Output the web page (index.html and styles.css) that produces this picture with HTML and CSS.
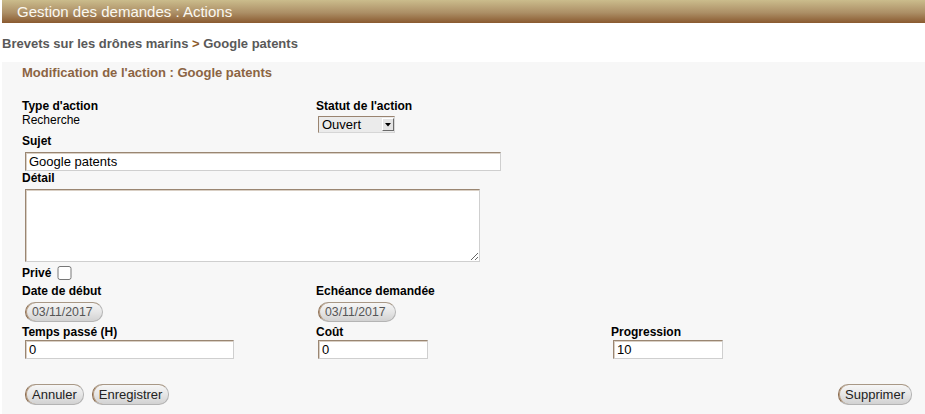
FILE: index.html
```html
<!DOCTYPE html>
<html lang="fr">
<head>
<meta charset="utf-8">
<title>Gestion des demandes : Actions</title>
<link rel="stylesheet" href="styles.css">
</head>
<body>
<div class="page">
  <div class="titlebar">Gestion des demandes : Actions</div>
  <div class="breadcrumb">Brevets sur les drônes marins <span class="sep">&gt;</span> Google patents</div>
  <div class="panel">
    <div class="panel-title">Modification de l'action : Google patents</div>

    <div class="grid row-type">
      <div class="col c1">
        <div class="lbl">Type d'action</div>
        <div class="val">Recherche</div>
      </div>
      <div class="col c2">
        <div class="lbl">Statut de l'action</div>
        <div class="selectwrap">
          <select class="sel">
            <option>Ouvert</option>
            <option>Fermé</option>
          </select>
          <span class="arrow"><svg width="10" height="11" viewBox="0 0 10 11"><path d="M2 4h6L5 7.5z" fill="#000"/></svg></span>
        </div>
      </div>
      <div class="col c3"></div>
    </div>

    <div class="block sujet">
      <div class="lbl">Sujet</div>
      <input class="inp w-sujet" type="text" value="Google patents">
    </div>

    <div class="block">
      <div class="lbl">Détail</div>
      <textarea class="txt"></textarea>
    </div>

    <div class="prive">
      <span class="lbl">Privé</span>
      <input class="chk" type="checkbox">
    </div>

    <div class="grid row-dates">
      <div class="col c1">
        <div class="lbl">Date de début</div>
        <button class="pill date" type="button">03/11/2017</button>
      </div>
      <div class="col c2">
        <div class="lbl">Echéance demandée</div>
        <button class="pill date" type="button">03/11/2017</button>
      </div>
      <div class="col c3"></div>
    </div>

    <div class="grid row-costs">
      <div class="col c1">
        <div class="lbl">Temps passé (H)</div>
        <input class="inp w-temps" type="text" value="0">
      </div>
      <div class="col c2">
        <div class="lbl">Coût</div>
        <input class="inp w-small" type="text" value="0">
      </div>
      <div class="col c3">
        <div class="lbl">Progression</div>
        <input class="inp w-small" type="text" value="10">
      </div>
    </div>

    <div class="actions">
      <div class="left">
        <button class="pill btn" type="button">Annuler</button>
        <button class="pill btn" type="button">Enregistrer</button>
      </div>
      <button class="pill btn" type="button">Supprimer</button>
    </div>
  </div>
</div>
</body>
</html>
```

FILE: styles.css
```css
html, body {
  margin: 0;
  padding: 0;
  background: #ffffff;
}

body {
  font-family: "Liberation Sans", Arial, sans-serif;
  color: #000;
}

.page {
  padding-left: 2px;
  height: 414px;
  overflow: hidden;
}

.titlebar {
  height: 23px;
  line-height: 23px;
  padding-left: 15px;
  font-size: 15px;
  color: #fbf8f0;
  background: linear-gradient(to bottom, #cbbc8c 0%, #ac8f66 55%, #8a5a30 100%);
}

.breadcrumb {
  padding: 13px 0 11px 0;
  font-size: 13px;
  line-height: 15px;
  font-weight: bold;
  color: #595959;
}

.breadcrumb .sep {
  color: #8b5a2b;
}

.panel {
  background: #f7f7f7;
  padding: 3px 19px 9px 20px;
}

.panel-title {
  font-size: 13px;
  line-height: 15px;
  font-weight: bold;
  color: #8b6443;
}

.grid {
  display: grid;
  grid-template-columns: 294px 295px 1fr;
}

.lbl {
  font-size: 12px;
  line-height: 14px;
  font-weight: bold;
}

.val {
  font-size: 12px;
  line-height: 14px;
}

.row-type {
  margin-top: 19px;
}

.c1 .inp,
.c1 .pill {
  margin-left: 3px;
}

.c2 .inp,
.c2 .pill,
.c2 .selectwrap,
.c3 .inp {
  margin-left: 2px;
}

.selectwrap {
  position: relative;
  width: 77px;
  height: 17px;
  margin-top: 3px;
}

.sel {
  -webkit-appearance: none;
  appearance: none;
  display: block;
  box-sizing: border-box;
  width: 77px;
  height: 17px;
  margin: 0;
  padding: 0 3px;
  font-family: "Liberation Sans", Arial, sans-serif;
  font-size: 13px;
  line-height: 14px;
  color: #000;
  background: #ebebeb;
  border: 1px solid;
  border-color: #9a8470 #d6d6d6 #d6d6d6 #9a8470;
  border-radius: 0;
  outline: none;
}

.arrow {
  position: absolute;
  right: 1px;
  top: 2px;
  box-sizing: border-box;
  width: 12px;
  height: 13px;
  background: #e4e4e4;
  border: 1px solid;
  border-color: #ffffff #6a6a6a #6a6a6a #ffffff;
  display: flex;
  align-items: center;
  justify-content: center;
}

.arrow svg {
  display: block;
}

.block.sujet {
  margin-top: 1px;
}

.inp {
  display: block;
  box-sizing: border-box;
  height: 19px;
  margin: 4px 0 0 3px;
  padding: 0 3px;
  font-family: "Liberation Sans", Arial, sans-serif;
  font-size: 13px;
  color: #000;
  background: #ffffff;
  border: 1px solid;
  border-color: #9a8672 #cfcfcf #cfcfcf #9a8672;
  box-shadow: inset 1px 1px 0 #d9cfc4;
  outline: none;
}

.w-sujet {
  width: 476px;
}

.w-temps {
  width: 209px;
}

.w-small {
  width: 110px;
}

.txt {
  display: block;
  box-sizing: border-box;
  width: 455px;
  height: 73px;
  margin: 4px 0 0 3px;
  padding: 2px 3px;
  font-family: "Liberation Sans", Arial, sans-serif;
  font-size: 13px;
  background: #ffffff;
  border: 1px solid;
  border-color: #9a8672 #cfcfcf #cfcfcf #9a8672;
  box-shadow: inset 1px 1px 0 #d9cfc4;
  outline: none;
}

.prive {
  display: flex;
  align-items: flex-start;
  height: 18px;
  margin-top: 4px;
}

.chk {
  width: 15px;
  height: 14px;
  margin: 0 0 0 6px;
}

.pill {
  box-sizing: border-box;
  height: 20px;
  margin: 0;
  font-family: "Liberation Sans", Arial, sans-serif;
  border: 1px solid #b4b4b4;
  border-left-color: #8c6e52;
  border-top-color: #a89886;
  border-radius: 10px;
  background: linear-gradient(to bottom, #f6f6f6 0%, #e6e6e6 50%, #d2d2d2 100%);
  box-shadow: inset 1px 0 0 #b89c80;
  cursor: pointer;
}

.date {
  display: block;
  width: 78px;
  margin-top: 4px;
  padding: 0 8px 0 6px;
  font-size: 12.3px;
  line-height: 18px;
  color: #555555;
  text-align: left;
}

.row-costs {
  margin-top: 3px;
}

.row-costs .inp {
  margin-top: 1px;
}

.actions {
  display: flex;
  justify-content: space-between;
  align-items: center;
  margin-top: 25px;
  margin-right: -6px;
}

.actions .left {
  display: flex;
  gap: 8px;
  margin-left: 3px;
}

.btn {
  height: 21px;
  padding: 0 6px;
  font-size: 13px;
  line-height: 19px;
  color: #222222;
}
```
